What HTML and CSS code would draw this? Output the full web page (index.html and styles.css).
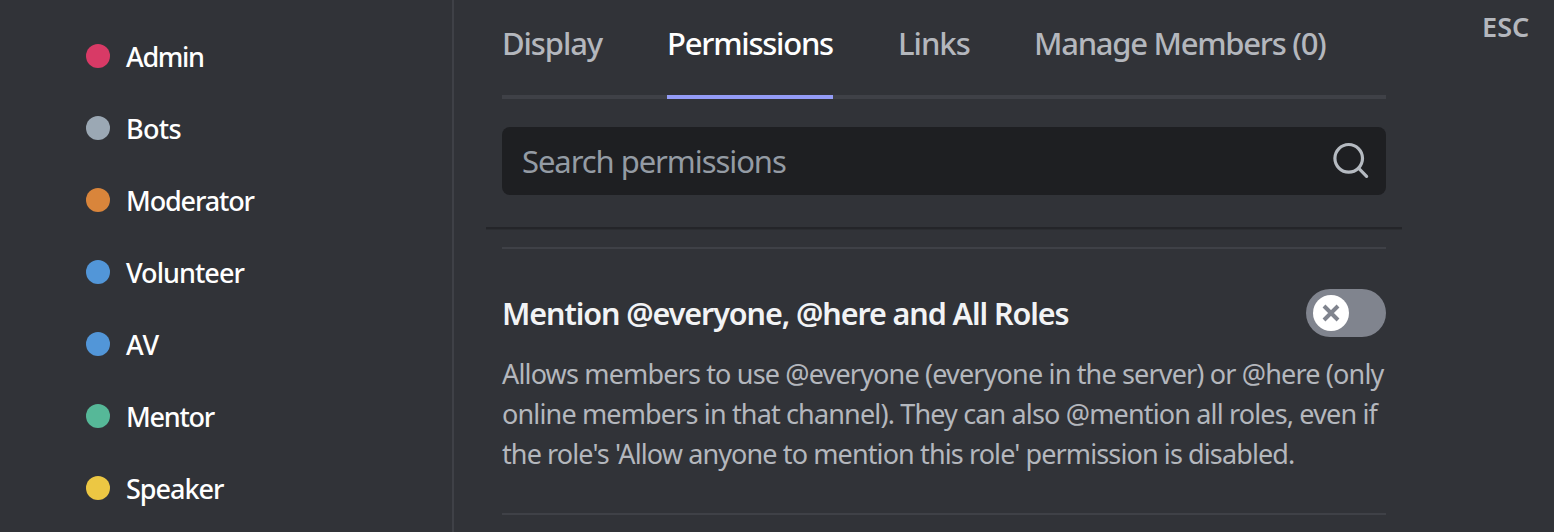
FILE: index.html
```html
<!DOCTYPE html>
<html lang="en">
<head>
<meta charset="utf-8">
<title>Role permissions</title>
<link rel="stylesheet" href="styles.css">
</head>
<body>
<div class="app">
  <nav class="roles">
    <div class="role"><span class="dot admin"></span><span class="name n-admin">Admin</span></div>
    <div class="role"><span class="dot bots"></span><span class="name n-bots">Bots</span></div>
    <div class="role"><span class="dot moderator"></span><span class="name n-moderator">Moderator</span></div>
    <div class="role"><span class="dot blue"></span><span class="name n-volunteer">Volunteer</span></div>
    <div class="role"><span class="dot blue"></span><span class="name n-av">AV</span></div>
    <div class="role"><span class="dot mentor"></span><span class="name n-mentor">Mentor</span></div>
    <div class="role"><span class="dot speaker"></span><span class="name n-speaker">Speaker</span></div>
  </nav>
  <main class="content">
    <div class="tabs">
      <div class="tab display"><span>Display</span></div>
      <div class="tab active"><span>Permissions</span></div>
      <div class="tab links"><span>Links</span></div>
      <div class="tab manage"><span>Manage Members (0)</span></div>
    </div>
    <div class="search">
      <span class="placeholder">Search permissions</span>
      <svg class="search-icon" width="40" height="40" viewBox="0 0 40 40"><circle cx="18.7" cy="17.3" r="13.8"/><path d="M28.5 27.2 36.6 35.3"/></svg>
    </div>
    <div class="sticky-edge"></div>
    <section class="permission">
      <div class="heading">
        <h3 class="title"><span>Mention @everyone, @here and All Roles</span></h3>
        <div class="switch"><div class="knob"><svg width="18" height="18" viewBox="0 0 18 18"><path d="M2 2 16 16M16 2 2 16"/></svg></div></div>
      </div>
      <div class="description">
        <div><span class="l1">Allows members to use @everyone (everyone in the server) or @here (only</span></div>
        <div><span class="l2">online members in that channel). They can also @mention all roles, even if</span></div>
        <div><span class="l3">the role's 'Allow anyone to mention this role' permission is disabled.</span></div>
      </div>
    </section>
  </main>
  <aside class="close"><span>ESC</span></aside>
</div>
</body>
</html>
```
FILE: styles.css
```css
* { box-sizing: border-box; }
body {
  margin: 0;
  background: #313338;
  font-family: "Noto Sans", "Open Sans", sans-serif;
  color: #b4b7bd;
}
.app { display: flex; width: 1554px; height: 532px; overflow: hidden; }
.roles {
  width: 454px;
  flex: none;
  border-right: 2px solid #3f4147;
  padding: 20px 0 0 86px;
}
.role { display: flex; align-items: center; gap: 16px; height: 72px; }
.dot { width: 24px; height: 24px; border-radius: 50%; }
.admin { background: #d83a66; }
.bots { background: #9ba8b4; }
.moderator { background: #d9853b; }
.blue { background: #5296d8; }
.mentor { background: #56b898; }
.speaker { background: #ecc743; }
.name { padding-top: 2px; font-size: 27px; font-weight: 500; line-height: 36px; color: #fff; }
.n-admin { letter-spacing: -1.3px; }
.n-bots { letter-spacing: -0.7px; }
.n-moderator { letter-spacing: -1.15px; }
.n-volunteer { letter-spacing: -0.95px; }
.n-av { letter-spacing: -0.1px; }
.n-mentor { letter-spacing: -1.25px; }
.n-speaker { letter-spacing: -1px; }
.content { width: 916px; margin-left: 32px; flex: none; }
.tabs {
  display: flex;
  gap: 65px;
  height: 99px;
  margin: 0 16px;
  box-shadow: inset 0 -4px #3f4147;
}
.tab { height: 99px; padding-top: 21px; font-size: 31px; font-weight: 500; line-height: 44px; white-space: nowrap; }
.display { width: 100px; letter-spacing: -1.1px; }
.active { width: 166px; color: #fff; border-bottom: 4px solid #949cf7; letter-spacing: -1.23px; }
.links { width: 71px; letter-spacing: -1px; }
.manage { letter-spacing: -1.27px; }
.search {
  display: flex;
  align-items: center;
  justify-content: space-between;
  height: 68px;
  margin: 28px 16px 32px;
  padding: 0 16px 0 20px;
  border-radius: 8px;
  background: #1e1f22;
}
.placeholder { font-size: 31px; line-height: 44px; color: #949ba4; letter-spacing: -1.07px; }
.search-icon { fill: none; stroke: #b5bac1; stroke-width: 3.2; stroke-linecap: round; }
.sticky-edge { height: 2px; background: #242529; box-shadow: 0 1px #2b2d31; }
.permission {
  height: 268px;
  margin: 18px 16px 0;
  border-top: 2px solid #3f4147;
  border-bottom: 2px solid #3f4147;
  padding-top: 40px;
}
.heading { display: flex; align-items: center; justify-content: space-between; height: 48px; }
.title { margin: 0; font-size: 30.5px; font-weight: 600; line-height: 48px; color: #f2f3f5; white-space: nowrap; letter-spacing: -1.08px; }
.switch { width: 80px; height: 48px; border-radius: 24px; background: #80848e; padding: 6px 7px; }
.knob { display: flex; align-items: center; justify-content: center; width: 36px; height: 36px; border-radius: 50%; background: #fff; }
.knob svg { fill: none; stroke: #80848e; stroke-width: 4; }
.description { padding-top: 17px; font-size: 27px; line-height: 40px; white-space: nowrap; letter-spacing: -0.84px; }
.l2 { letter-spacing: -0.85px; }
.l3 { letter-spacing: -0.89px; }
.close { padding: 9px 0 0 80px; font-size: 27px; font-weight: 600; line-height: 36px; letter-spacing: 0.1px; }
```
